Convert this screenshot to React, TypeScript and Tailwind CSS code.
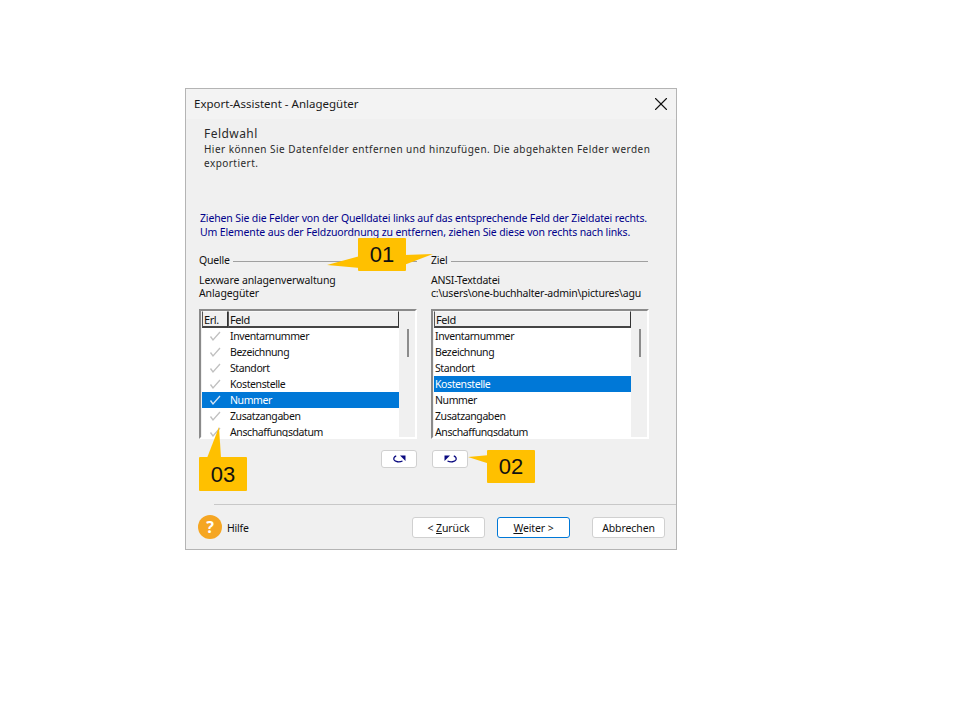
import React from 'react';
import { X } from 'lucide-react';

const ui = { fontFamily: '"Noto Sans", sans-serif' };

const leftRows = ['Inventarnummer', 'Bezeichnung', 'Standort', 'Kostenstelle', 'Nummer', 'Zusatzangaben', 'Anschaffungsdatum'];

const Check = ({ light }: { light?: boolean }) => (
  <svg width="14" height="12" viewBox="0 0 14 12" fill="none" className="shrink-0">
    <path d="M2.5 6.5 L5 10 L12 2" stroke={light ? '#d8e6f5' : '#c0c0c0'} strokeWidth="1.3" />
  </svg>
);

const HeaderCell = ({ label, className }: { label: string; className: string }) => (
  <div className={`h-[17px] bg-[#f0f0f0] border border-t-[#f8f8f8] border-l-[#555] border-b-2 border-b-[#444] border-r-[#333] pl-px pt-px text-[11px] leading-[14px] ${className}`}>
    {label}
  </div>
);

const FieldList = ({ withCheck, selected }: { withCheck?: boolean; selected: string }) => (
  <div className="h-[130px] w-[218px] flex border-2 border-t-[#8a8a8a] border-l-[#8a8a8a] border-r-white border-b-white bg-[#f0f0f0] overflow-hidden text-[10.5px] tracking-[-0.4px] text-[#111]">
    <div className="w-[197px] shrink-0 ml-px">
      <div className="flex">
        {withCheck && <HeaderCell label="Erl." className="w-[26px]" />}
        <HeaderCell label="Feld" className={withCheck ? 'w-[171px]' : 'w-[197px]'} />
      </div>
      <div className="bg-white h-[112px] overflow-hidden">
        {leftRows.map((row) => {
          const active = row === selected;
          return (
            <div key={row} className={`h-4 flex items-center leading-4 whitespace-nowrap ${active ? 'bg-[#0078d7] text-white' : ''}`}>
              {withCheck && (
                <div className="w-[28px] pl-[6px]">
                  <Check light={active} />
                </div>
              )}
              <span className={withCheck ? '' : 'pl-px'}>{row}</span>
            </div>
          );
        })}
      </div>
    </div>
    <div className="flex-1 pt-[18px] pl-[8px]">
      <div className="w-[2px] h-[28px] bg-[#8c8c8c]" />
    </div>
  </div>
);

const GroupHead = ({ label, width }: { label: string; width: string }) => (
  <div className={`flex items-center gap-[3px] h-4 ${width}`}>
    <span className="text-[10.5px] tracking-[-0.2px] text-[#111] leading-4">{label}</span>
    <div className="flex-1 h-px bg-[#a0a0a0] mt-[2px]" />
  </div>
);

const Turn = ({ flip }: { flip?: boolean }) => (
  <svg width="13" height="8" viewBox="0 0 13 8" fill="none" className={flip ? '-scale-x-100' : ''}>
    <path d="M3.2 1 C1 1.5 0.6 3.5 1 4.8 C2 7 6.5 7.4 9.5 6" stroke="#0a0a80" strokeWidth="1.3" />
    <path d="M7 0.5 L12.5 0.5 L12.5 6 Z" fill="#0a0a80" />
  </svg>
);

const WizardButton = ({ children, primary }: { children: React.ReactNode; primary?: boolean }) => (
  <button className={`w-[73px] h-[21px] pt-[2px] rounded-[3px] bg-white text-[10.5px] tracking-[-0.1px] text-[#111] leading-none border ${primary ? 'border-[#0078d7]' : 'border-[#d0d0d0]'}`}>
    {children}
  </button>
);

const Callout = ({ label, className }: { label: string; className: string }) => (
  <div
    className={`absolute w-[48px] bg-[#ffc000] rounded-[1px] flex items-center justify-center text-[22px] text-[#111] ${className}`}
    style={{ fontFamily: '"Liberation Sans", sans-serif' }}
  >
    {label}
  </div>
);

export default function App() {
  return (
    <div className="relative w-[960px] h-[720px] bg-white overflow-hidden" style={ui}>
      <div className="absolute left-[185px] top-[88px] w-[492px] h-[462px] bg-[#f0f0f0] border border-[#b4b4b4] flex flex-col">
        <div className="h-[30px] shrink-0 bg-[#f3f3f3] flex items-center justify-between pl-2 pr-[4px]">
          <span className="text-[11.5px] text-[#1a1a1a]">Export-Assistent - Anlagegüter</span>
          <X size={22} strokeWidth={1.2} className="text-[#111]" />
        </div>

        <div className="pl-[18px] pr-[27px] pt-[8px] h-[92px] text-[#2a2a2a]">
          <div className="text-[12px] leading-[14px] tracking-[0.45px]">Feldwahl</div>
          <p className="text-[10px] leading-[14px] tracking-[0.46px] mt-[1px] whitespace-nowrap">
            <span className="block">Hier können Sie Datenfelder entfernen und hinzufügen. Die abgehakten Felder werden</span>
            <span className="block">exportiert.</span>
          </p>
        </div>

        <div className="pl-[14px] text-[10.5px] leading-[14px] text-[#00008b] h-[28px] whitespace-nowrap tracking-[-0.14px]">
          <div>Ziehen Sie die Felder von der Quelldatei links auf das entsprechende Feld der Zieldatei rechts.</div>
          <div>Um Elemente aus der Feldzuordnung zu entfernen, ziehen Sie diese von rechts nach links.</div>
        </div>

        <div className="flex pl-[13px] pt-[13px] gap-[14px]">
          <div className="w-[218px]">
            <GroupHead label="Quelle" width="w-[218px]" />
            <div className="mt-[6px] text-[10.5px] leading-[13px] text-[#111] tracking-[-0.1px]">
              <div>Lexware anlagenverwaltung</div>
              <div>Anlagegüter</div>
            </div>
            <div className="mt-[9px]">
              <FieldList withCheck selected="Nummer" />
            </div>
            <div className="flex justify-end mt-[11px]">
              <button className="w-[36px] h-[18px] bg-white rounded-[3px] border border-[#d0d0d0] flex items-center justify-center">
                <Turn />
              </button>
            </div>
          </div>
          <div className="w-[218px]">
            <GroupHead label="Ziel" width="w-[217px]" />
            <div className="mt-[6px] text-[10.5px] leading-[13px] text-[#111] tracking-[-0.22px] w-[210px] whitespace-nowrap">
              <div>ANSI-Textdatei</div>
              <div>c:\users\one-buchhalter-admin\pictures\agu</div>
            </div>
            <div className="mt-[9px]">
              <FieldList selected="Kostenstelle" />
            </div>
            <div className="flex mt-[11px] pl-px">
              <button className="w-[36px] h-[18px] bg-white rounded-[3px] border border-[#d0d0d0] flex items-center justify-center">
                <Turn flip />
              </button>
            </div>
          </div>
        </div>

        <div className="mt-auto ml-[28px] border-t border-[#c8c8c8] h-[45px] flex items-center justify-between pr-[11px]">
          <div className="flex items-center">
            <div className="-ml-[16px] w-6 h-6 rounded-full bg-[#f5a623] text-white font-bold text-[16px] flex items-center justify-center">?</div>
            <span className="ml-[5px] mt-[3px] text-[10.5px] tracking-[-0.2px] text-[#111]">Hilfe</span>
          </div>
          <div className="flex items-center">
            <WizardButton>&lt; <span className="underline">Z</span>urück</WizardButton>
            <div className="w-3" />
            <WizardButton primary><span className="underline">W</span>eiter &gt;</WizardButton>
            <div className="w-[22px]" />
            <WizardButton>Abbrechen</WizardButton>
          </div>
        </div>
      </div>

      {/* callouts and their pointers */}
      <svg className="absolute left-0 top-0 pointer-events-none" width="960" height="720">
        <polygon points="360,256 327,265 360,268" fill="#ffc000" />
        <polygon points="404,255 433,254 404,265" fill="#ffc000" />
        <polygon points="490,455 468,457 490,464" fill="#ffc000" />
        <polygon points="207,458 219,427 221,458" fill="#ffc000" />
      </svg>
      <Callout label="01" className="left-[358px] top-[238px] h-[33px]" />
      <Callout label="02" className="left-[487px] top-[450px] h-[33px]" />
      <Callout label="03" className="left-[199px] top-[457px] h-[34px]" />
    </div>
  );
}
